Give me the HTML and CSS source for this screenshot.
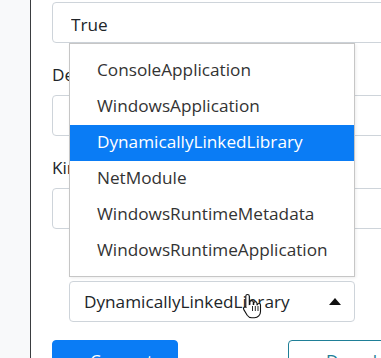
FILE: index.html
```html
<!DOCTYPE html>
<html lang="en">
<head>
    <meta charset="UTF-8">
    <meta name="viewport" content="width=381">
    <title>Project Settings</title>
    <link rel="stylesheet" href="styles.css">
</head>
<body>
    <div class="layout">
        <aside class="sidebar"></aside>
        <main class="content">
            <div class="field field-first">
                <input class="control" type="text" value="True">
            </div>
            <div class="field">
                <label class="field-label">Description</label>
                <input class="control" type="text" value="5.0 build">
            </div>
            <div class="field">
                <label class="field-label">Kind</label>
                <input class="control" type="text" value="1">
            </div>
            <div class="field field-nested">
                <label class="field-label">Output type</label>
                <div class="select-wrap">
                    <ul class="listbox">
                        <li class="option">ConsoleApplication</li>
                        <li class="option">WindowsApplication</li>
                        <li class="option selected">DynamicallyLinkedLibrary</li>
                        <li class="option">NetModule</li>
                        <li class="option">WindowsRuntimeMetadata</li>
                        <li class="option">WindowsRuntimeApplication</li>
                    </ul>
                    <div class="select">
                        <span>DynamicallyLinkedLibrary</span>
                        <span class="caret"></span>
                    </div>
                    <svg class="pointer" width="20" height="26" viewBox="0 0 20 26">
                        <path d="M5.5 1.5c1 0 1.8.8 1.8 1.8v8.2l.6-.1V9.3c0-1 .8-1.7 1.7-1.7s1.7.8 1.7 1.7v2.1h.4v-1c0-.9.8-1.6 1.7-1.6s1.6.7 1.6 1.6v1.4h.4c.1-.8.8-1.3 1.6-1.3.9 0 1.5.7 1.5 1.6v6.3c0 3.6-2.6 6.4-6 6.4H9.7c-2 0-3.4-.9-4.5-2.5L1.8 16.6c-.5-.8-.3-1.8.4-2.3.7-.5 1.7-.4 2.2.3l-.6-.4V3.3c0-1 .7-1.8 1.7-1.8z" fill="#fff" stroke="#111" stroke-width="1.1"/>
                        <path d="M10.5 13v5M13.3 13v5M16 13v5" stroke="#111" stroke-width="0.9"/>
                    </svg>
                </div>
            </div>
            <div class="actions">
                <button class="btn btn-primary"><span class="btn-icon">&#x2191;</span>Convert</button>
                <button class="btn btn-outline"><span class="btn-icon">&#x2193;</span>Download</button>
            </div>
        </main>
    </div>
</body>
</html>
```

FILE: styles.css
```css
html, body {
    margin: 0;
    padding: 0;
    overflow: hidden;
    background: #fff;
}
body {
    font-family: 'Open Sans', 'Noto Sans', sans-serif;
    font-size: 17.2px;
    color: #212529;
}
.layout {
    display: flex;
    min-height: 358px;
}
.sidebar {
    width: 30px;
    flex: none;
    background: #f8f9fa;
    border-right: 1px solid #3a3d40;
}
.content {
    flex: none;
    width: 380px;
    padding: 2px 0 0 21px;
}
.field {
    margin-bottom: 20px;
}
.field-label {
    display: block;
    line-height: 24px;
    margin-bottom: 8px;
}
.control {
    display: block;
    box-sizing: border-box;
    width: 100%;
    height: 41px;
    padding: 3px 18px 0;
    border: 1px solid #ced4da;
    border-radius: 4px;
    font-family: inherit;
    font-size: 17.2px;
    color: #212529;
    background: #fff;
}
.field-nested {
    margin-left: 17px;
    margin-bottom: 18px;
}
.select-wrap {
    position: relative;
    width: 286px;
}
.select {
    box-sizing: border-box;
    height: 41px;
    display: flex;
    align-items: center;
    justify-content: space-between;
    padding: 0 13px 0 14px;
    border: 1px solid #ced4da;
    border-radius: 4px;
    background: #fff;
}
.caret {
    width: 0;
    height: 0;
    border-left: 6px solid transparent;
    border-right: 6px solid transparent;
    border-bottom: 7px solid #111;
}
.listbox {
    position: absolute;
    left: 0;
    right: 0;
    bottom: calc(100% + 4px);
    margin: 0;
    padding: 9px 0 7px;
    list-style: none;
    background: #fff;
    border: 1px solid #c6c6c6;
    box-shadow: 1px 1px 3px rgba(0, 0, 0, 0.08);
    z-index: 2;
}
.option {
    height: 36px;
    line-height: 34px;
    padding-left: 27px;
    color: #333;
    white-space: nowrap;
}
.option.selected {
    background: #0a7cf5;
    color: #fff;
}
.pointer {
    position: absolute;
    left: 173px;
    top: 12px;
    z-index: 3;
}
.actions {
    display: flex;
    gap: 110px;
}
.btn {
    height: 40px;
    padding: 0 22px;
    border-radius: 4px;
    font-family: inherit;
    font-size: 17.2px;
    display: flex;
    align-items: center;
    gap: 8px;
}
.btn-primary {
    width: 126px;
    background: #0a7cf5;
    border: 1px solid #0a7cf5;
    color: #fff;
}
.btn-outline {
    background: #fff;
    border: 1px solid #1f7f97;
    color: #1f7f97;
}
.btn-icon {
    font-size: 14px;
}
```
